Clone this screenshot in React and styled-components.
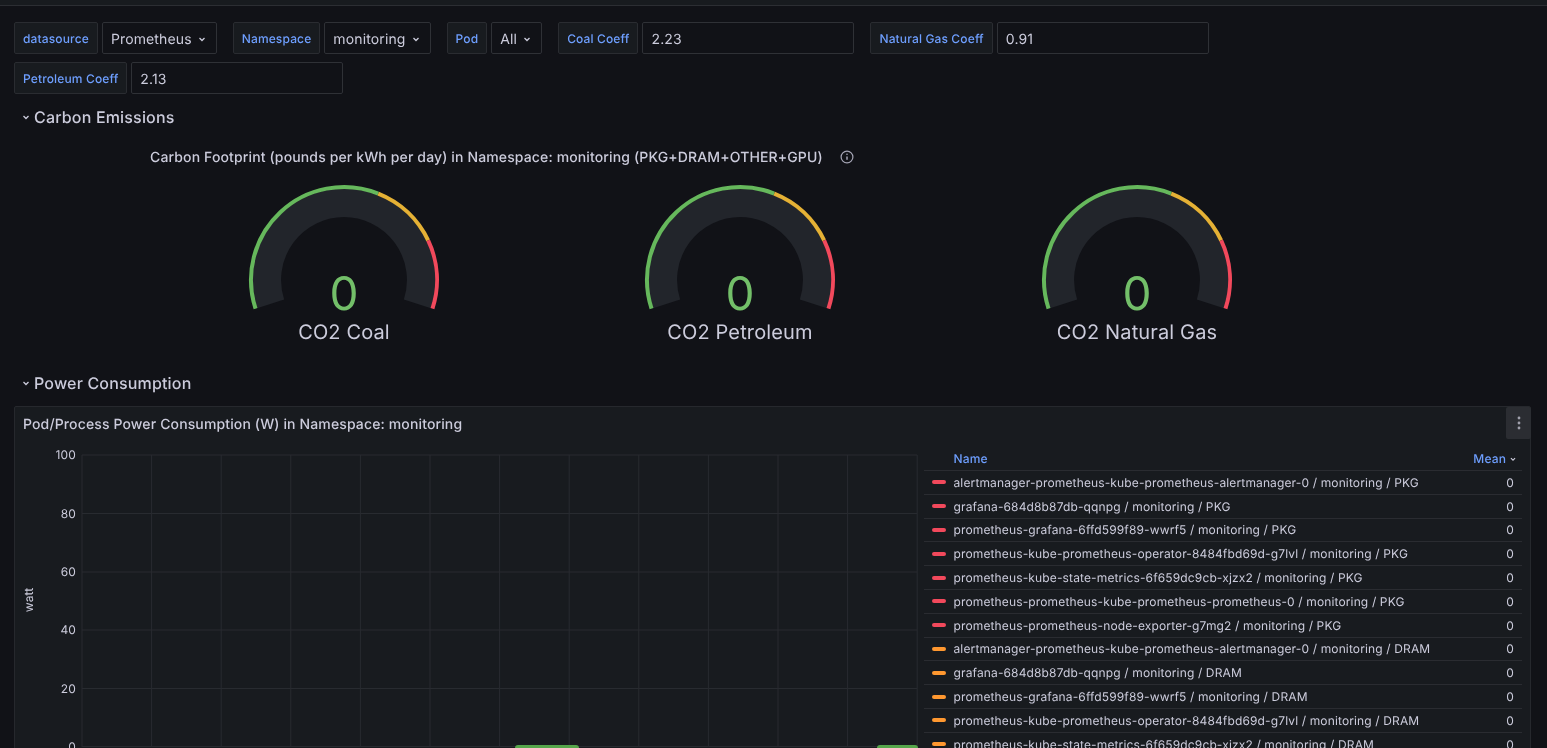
import styled, { createGlobalStyle } from 'styled-components';

const GlobalStyle = createGlobalStyle`
  html, body {
    margin: 0;
    height: 748px;
    overflow: hidden;
    background: #111217;
    color: #ccccdc;
    font-family: Inter, "Noto Sans", sans-serif;
    letter-spacing: 0.0085em;
    text-rendering: geometricPrecision;
  }
  * { box-sizing: border-box; }
`;

const Page = styled.div`
  height: 748px;
  overflow: hidden;
  will-change: transform;
`;

const TopBar = styled.div`
  height: 6px;
  background: #181b1f;
  border-bottom: 1px solid #2c2e33;
`;

const Variables = styled.div`
  display: flex;
  flex-wrap: wrap;
  gap: 8px 16px;
  width: 1300px;
  padding: 16px 0 0 14px;
`;

const Variable = styled.div`
  display: flex;
  gap: 4px;
  height: 32px;
`;

const VarLabel = styled.label`
  display: flex;
  align-items: center;
  padding: 0 8px;
  background: #181b1f;
  border: 1px solid #2a2c31;
  border-radius: 2px;
  color: #6e9fff;
  font-size: 12px;
  font-weight: 500;
  letter-spacing: 0.0115em;
  white-space: nowrap;
`;

const VarSelect = styled.div`
  display: flex;
  align-items: center;
  gap: 4px;
  padding: 2px 8px 0;
  border: 1px solid #2f3136;
  border-radius: 2px;
  font-size: 14px;
  letter-spacing: 0.0095em;
  color: #ccccdc;
`;

const VarInput = styled.div`
  display: flex;
  align-items: center;
  width: 212px;
  padding: 2px 8px 0;
  border: 1px solid #2f3136;
  border-radius: 2px;
  font-size: 14px;
  color: #ccccdc;
`;

const SectionRow = styled.div`
  display: flex;
  align-items: center;
  gap: 2px;
  height: 32px;
  margin-top: 7px;
  padding-left: 20px;
  font-size: 16px;
  font-weight: 500;
  letter-spacing: 0.0107em;
  color: #ccccdc;
`;

const GaugePanel = styled.section`
  width: 1189px;
  margin: 12px 0 22px 146px;
`;

const GaugeHeader = styled.div`
  display: flex;
  align-items: center;
  gap: 17px;
  height: 24px;
  padding-left: 4px;
  font-size: 14px;
  font-weight: 500;
  letter-spacing: 0.0095em;
`;

const GaugeGrid = styled.div`
  display: grid;
  grid-template-columns: repeat(3, 1fr);
`;

const GaugeSvg = styled.svg`
  display: block;
  width: 100%;
  height: 176px;
`;

const Panel = styled.section`
  margin: 7px 16px 0 14px;
  background: #181b1f;
  border: 1px solid #26282d;
  border-radius: 2px;
`;

const PanelHeader = styled.div`
  display: flex;
  align-items: center;
  justify-content: space-between;
  height: 32px;
  padding-left: 8px;
`;

const PanelTitle = styled.h2`
  margin: 0;
  padding-top: 2px;
  font-size: 14px;
  font-weight: 500;
  letter-spacing: 0.0095em;
`;

const MenuButton = styled.div`
  display: flex;
  align-items: center;
  justify-content: center;
  width: 25px;
  height: 32px;
  margin-right: -1px;
  background: #2b2d32;
  border-radius: 2px;
`;

const PanelBody = styled.div`
  display: flex;
  height: 320px;
`;

const ChartSvg = styled.svg`
  display: block;
  flex: 0 0 909px;
  height: 320px;
`;

const Legend = styled.div`
  flex: 0 0 598px;
  padding-top: 8px;
  font-size: 12px;
`;

const LegendHead = styled.div`
  display: flex;
  align-items: center;
  justify-content: space-between;
  height: 23px;
  padding: 0 4px 0 29.5px;
  color: #6e9fff;
  font-weight: 500;
`;

const Sort = styled.span`
  display: flex;
  align-items: center;
  gap: 2px;
`;

const LegendRow = styled.div`
  display: flex;
  align-items: center;
  height: 23.8px;
  padding: 0 8px;
  border-top: 1px solid #2a2c31;
  color: #ccccdc;
`;

const Swatch = styled.span`
  flex: none;
  width: 14px;
  height: 4px;
  margin-right: 7.5px;
  border-radius: 2px;
  background: ${(p) => p.$color};
`;

const SeriesName = styled.span`
  flex: 1;
  white-space: nowrap;
`;

const Chevron = ({ size = 12 }) => (
  <svg width={size} height={size} viewBox="0 0 12 12" fill="none" stroke="#ccccdc" strokeWidth="1.3">
    <path d="M3.5 5l2.5 2.5L8.5 5" />
  </svg>
);

const InfoIcon = () => (
  <svg width="14" height="14" viewBox="0 0 14 14" fill="none" stroke="#a5a5b5" strokeWidth="1.2">
    <circle cx="7" cy="7" r="5.9" />
    <path d="M7 6.4v3.4" strokeWidth="1.5" />
    <circle cx="7" cy="4.3" r="0.8" fill="#a5a5b5" stroke="none" />
  </svg>
);

const polar = (r, deg) => {
  const a = ((deg - 90) * Math.PI) / 180;
  return [198 + r * Math.cos(a), 111 + r * Math.sin(a)];
};

const arc = (r, from, to) => {
  const [x1, y1] = polar(r, from);
  const [x2, y2] = polar(r, to);
  return `M${x1} ${y1}A${r} ${r} 0 ${to - from > 180 ? 1 : 0} 1 ${x2} ${y2}`;
};

const Gauge = ({ label }) => (
  <GaugeSvg viewBox="0 0 396.33 176">
    <path d={arc(77.2, -108, 108)} fill="none" stroke="#22252b" strokeWidth="28.5" />
    <path d={arc(93, -108, 21.6)} fill="none" stroke="#66b85c" strokeWidth="4" />
    <path d={arc(93, 21.6, 64.8)} fill="none" stroke="#e5b135" strokeWidth="4" />
    <path d={arc(93, 64.8, 108)} fill="none" stroke="#f2495c" strokeWidth="4" />
    <text x="198" y="141" textAnchor="middle" fontSize="46" fill="#73bf69" fontFamily="Inter">0</text>
    <text x="198" y="170" textAnchor="middle" fontSize="20" fill="#ccccdc" fontFamily="Inter">{label}</text>
  </GaugeSvg>
);

const yTicks = [
  ['100', 455],
  ['80', 513.5],
  ['60', 572],
  ['40', 630],
  ['20', 688.5],
  ['0', 746.5],
];

const xLines = Array.from({ length: 13 }, (_, i) => 82 + i * 69.6);

const Chart = () => (
  <ChartSvg viewBox="15 439 909 320">
    {yTicks.map(([label, y]) => (
      <g key={label}>
        <line x1="82" x2="917" y1={y} y2={y} stroke="#282b30" />
        <text x="76" y={y + 4} textAnchor="end" fontSize="12" fill="#ccccdc" fontFamily="Inter">{label}</text>
      </g>
    ))}
    {xLines.map((x) => (
      <line key={x} x1={x} x2={x} y1="455" y2="747" stroke="#282b30" />
    ))}
    <text transform="translate(33 600) rotate(-90)" textAnchor="middle" fontSize="12" fill="#ccccdc" fontFamily="Inter">watt</text>
    <path d="M515 759v-11q0-3 3-3h58q3 0 3 3v11z" fill="#56a64b" />
    <path d="M877 759v-11q0-3 3-3h35q3 0 3 3v11z" fill="#56a64b" />
  </ChartSvg>
);

const RED = '#f2495c';
const ORANGE = '#ff9830';

const series = [
  ['alertmanager-prometheus-kube-prometheus-alertmanager-0 / monitoring / PKG', RED],
  ['grafana-684d8b87db-qqnpg / monitoring / PKG', RED],
  ['prometheus-grafana-6ffd599f89-wwrf5 / monitoring / PKG', RED],
  ['prometheus-kube-prometheus-operator-8484fbd69d-g7lvl / monitoring / PKG', RED],
  ['prometheus-kube-state-metrics-6f659dc9cb-xjzx2 / monitoring / PKG', RED],
  ['prometheus-prometheus-kube-prometheus-prometheus-0 / monitoring / PKG', RED],
  ['prometheus-prometheus-node-exporter-g7mg2 / monitoring / PKG', RED],
  ['alertmanager-prometheus-kube-prometheus-alertmanager-0 / monitoring / DRAM', ORANGE],
  ['grafana-684d8b87db-qqnpg / monitoring / DRAM', ORANGE],
  ['prometheus-grafana-6ffd599f89-wwrf5 / monitoring / DRAM', ORANGE],
  ['prometheus-kube-prometheus-operator-8484fbd69d-g7lvl / monitoring / DRAM', ORANGE],
  ['prometheus-kube-state-metrics-6f659dc9cb-xjzx2 / monitoring / DRAM', ORANGE],
];

const App = () => (
  <Page>
    <GlobalStyle />
    <TopBar />
    <Variables>
      <Variable>
        <VarLabel>datasource</VarLabel>
        <VarSelect>Prometheus <Chevron /></VarSelect>
      </Variable>
      <Variable>
        <VarLabel>Namespace</VarLabel>
        <VarSelect>monitoring <Chevron /></VarSelect>
      </Variable>
      <Variable>
        <VarLabel>Pod</VarLabel>
        <VarSelect>All <Chevron /></VarSelect>
      </Variable>
      <Variable>
        <VarLabel>Coal Coeff</VarLabel>
        <VarInput>2.23</VarInput>
      </Variable>
      <Variable>
        <VarLabel>Natural Gas Coeff</VarLabel>
        <VarInput>0.91</VarInput>
      </Variable>
      <Variable>
        <VarLabel>Petroleum Coeff</VarLabel>
        <VarInput>2.13</VarInput>
      </Variable>
    </Variables>

    <SectionRow><Chevron />Carbon Emissions</SectionRow>
    <GaugePanel>
      <GaugeHeader>
        Carbon Footprint (pounds per kWh per day) in Namespace: monitoring (PKG+DRAM+OTHER+GPU)
        <InfoIcon />
      </GaugeHeader>
      <GaugeGrid>
        <Gauge label="CO2 Coal" />
        <Gauge label="CO2 Petroleum" />
        <Gauge label="CO2 Natural Gas" />
      </GaugeGrid>
    </GaugePanel>

    <SectionRow><Chevron />Power Consumption</SectionRow>
    <Panel>
      <PanelHeader>
        <PanelTitle>Pod/Process Power Consumption (W) in Namespace: monitoring</PanelTitle>
        <MenuButton>
          <svg width="4" height="14" viewBox="0 0 4 14" fill="#a0a0ac">
            <circle cx="2" cy="2" r="1.4" />
            <circle cx="2" cy="7" r="1.4" />
            <circle cx="2" cy="12" r="1.4" />
          </svg>
        </MenuButton>
      </PanelHeader>
      <PanelBody>
        <Chart />
        <Legend>
          <LegendHead>
            <span>Name</span>
            <Sort>Mean <Chevron size={10} /></Sort>
          </LegendHead>
          {series.map(([name, color]) => (
            <LegendRow key={name}>
              <Swatch $color={color} />
              <SeriesName>{name}</SeriesName>
              0
            </LegendRow>
          ))}
        </Legend>
      </PanelBody>
    </Panel>
  </Page>
);

export default App;
